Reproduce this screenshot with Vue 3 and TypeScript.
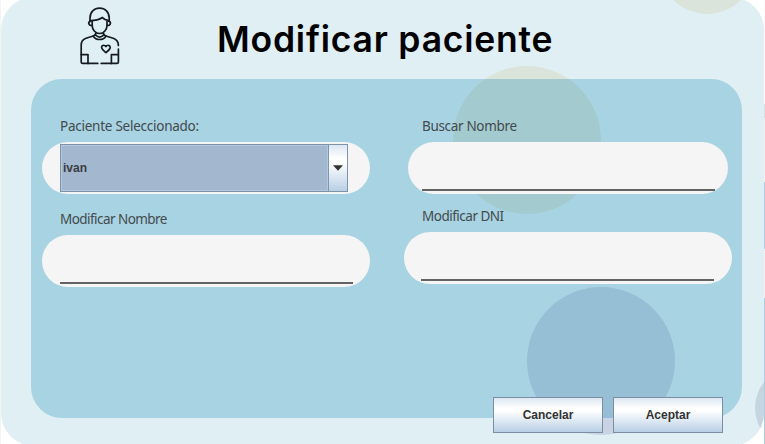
<script setup lang="ts">
import { ref } from 'vue'

const patients = ['ivan']
const selected = ref<string>(patients[0])
const search = ref('')
const name = ref('')
const dni = ref('')
</script>

<template>
  <div class="window">
    <div class="edge"></div>
    <main class="sheet">
      <i class="dot dot-top"></i>
      <i class="dot dot-middle"></i>
      <i class="dot dot-lower"></i>
      <i class="dot dot-right"></i>

      <header class="header">
        <svg class="patient" viewBox="0 0 40 58" fill="none" stroke="#151b1e" stroke-width="1.7" stroke-linecap="round" stroke-linejoin="round">
          <path d="M10 14.5V11C10 5 14 1.2 19.6 1.2S29.2 5 29.2 11v3.5" />
          <path d="M10.2 13.7c4.4-.1 8.8-1 12.2-3.2 2 2.5 4.3 2.7 6.8 3" />
          <path d="M12.2 14v4.5c0 4.1 3.1 8 7.4 8s7.4-3.9 7.4-8V14" />
          <path d="M10.5 14.2c-2.6 0-2.6 4.4 1.7 4.5M28.7 14.2c2.6 0 2.6 4.4-1.7 4.5" />
          <path d="M15.6 26v2.2c2.4 2.2 5.6 2.2 8 0V26" />
          <path d="M15.2 27.7l-2 1.5c2.8 4.4 10 4.4 12.8 0l-2-1.5" />
          <path d="M13.2 29L6 31.2C2.4 32.4 1.2 35 1.2 38.2V55q0 1.4 1.4 1.4H17.8M26 29l7.2 2.2c3.6 1.2 5.2 3.4 5.2 7.3M38.4 42.2V55q0 1.4-1.4 1.4H21.2" />
          <path d="M1.2 47.6H8v8.8M38.2 47.6h-6.8v8.8" />
          <path d="M25.9 45.6c-2.8-2.2-4.5-3.5-4.3-5.4.2-2.3 3.1-2.6 4.3-.6 1.2-2 4.1-1.7 4.3.6.2 1.9-1.5 3.2-4.3 5.4z" />
        </svg>
        <h1>Modificar paciente</h1>
      </header>

      <form class="panel" @submit.prevent>
        <i class="dot tint-middle"></i>
        <i class="dot tint-lower"></i>
        <div class="column">
          <label class="label first">Paciente Seleccionado:</label>
          <div class="pill pill-select">
            <button type="button" class="combo">
              <span class="value">{{ selected }}</span>
              <span class="arrow"><svg width="10" height="6" viewBox="0 0 10 6"><path d="M0 .3h10L5 5.7z" fill="#333" /></svg></span>
            </button>
          </div>
          <label class="label name-label">Modificar Nombre</label>
          <div class="pill"><input v-model="name" class="line" /></div>
        </div>
        <div class="column right">
          <label class="label first">Buscar Nombre</label>
          <div class="pill pill-search"><input v-model="search" class="line" /></div>
          <label class="label dni-label">Modificar DNI</label>
          <div class="pill pill-dni"><input v-model="dni" class="line" /></div>
        </div>
      </form>

      <footer class="actions">
        <button type="button" class="btn">Cancelar</button>
        <button type="button" class="btn">Aceptar</button>
      </footer>
    </main>
    <div class="edge edge-right"></div>
  </div>
</template>

<style>
body { overflow: hidden; background: #fff; }
</style>

<style scoped>
.window {
  display: flex;
  width: 765px;
  height: 444px;
  overflow: hidden;
  background: #fff;
  font-family: "Noto Sans", sans-serif;
}
.edge { width: 1px; height: 444px; background: #f3f3f3; }
.edge-right {
  background: linear-gradient(#fafafa 104px, #d5dfe0 104px 118px, #eff1f2 118px 182px, #a9cfdd 182px 249px, #f3f1f2 249px 298px, #a9cfdd 298px);
}
.sheet {
  position: relative;
  flex: none;
  width: 763px;
  height: 449px;
  margin-top: -3px;
  border-radius: 33px;
  overflow: hidden;
  background: #e0eff4;
}
.dot { position: absolute; border-radius: 50%; width: 148px; height: 148px; }
.dot-top { width: 96px; height: 96px; left: 658px; top: -79px; background: #dae4da; }
.dot-middle { left: 452px; top: 69px; background: #dae4da; }
.dot-lower { left: 526px; top: 290px; background: #c8d4e4; }
.dot-right { width: 84px; height: 84px; left: 754px; top: 369px; background: #c7d5e0; }
.header { position: relative; display: flex; height: 81.5px; padding-left: 79px; box-sizing: border-box; }
.patient { width: 40px; height: 58px; margin-top: 10px; flex: none; }
h1 {
  margin: 19px 0 0 97px;
  font: 600 35.5px/48px Inter, sans-serif;
  letter-spacing: .78px;
  white-space: nowrap;
  color: #000;
}
.panel {
  position: relative;
  display: flex;
  width: 711px;
  height: 339px;
  margin-left: 30px;
  box-sizing: border-box;
  padding-left: 11px;
  border-radius: 31px;
  overflow: hidden;
  background: #a8d3e2;
}
.tint-middle { left: 422px; top: -12.5px; background: #a3cbcf; }
.tint-lower { left: 496px; top: 208.5px; background: #96bed5; }
.column { position: relative; width: 328px; display: flex; flex-direction: column; }
.right { margin-left: 34px; }
.label {
  height: 20px;
  margin-left: 18px;
  font-size: 13.5px;
  line-height: 20px;
  letter-spacing: -.25px;
  color: #434a4d;
  white-space: nowrap;
}
.first { margin-top: 37px; }
.right .first { letter-spacing: -.33px; }
.name-label { margin-top: 15px; letter-spacing: -.55px; }
.dni-label { margin-top: 12px; letter-spacing: -.5px; }
.pill {
  display: flex;
  box-sizing: border-box;
  height: 51.5px;
  margin-top: 6.5px;
  padding: 0 17px 0 18px;
  border-radius: 26px;
  background: #f5f5f5;
}
.pill-select { margin-top: 6.5px; padding: 2px 22px 1.5px 18px; }
.pill-search { width: 320px; margin-left: 4px; padding: 0 13px 0 14px; }
.pill-dni { padding: 0 18px 0 17px; }
.line {
  width: 100%;
  height: 49px;
  box-sizing: border-box;
  padding: 0 2px;
  border: 0;
  outline: 0;
  border-bottom: 2px solid #636363;
  border-radius: 0;
  background: transparent;
  font: inherit;
}
.combo {
  display: flex;
  flex: 1;
  box-sizing: border-box;
  height: 48px;
  padding: 0;
  border: 1px solid #7f93a8;
  background: #a3b8ce;
  font: bold 12px/46px "Liberation Sans", sans-serif;
  color: #3b3b43;
}
.value { flex: 1; padding-left: 2px; text-align: left; box-shadow: inset 0 0 0 1px #b0c8e0; }
.arrow {
  display: flex;
  align-items: center;
  justify-content: center;
  width: 18px;
  border-left: 1px solid #8095ad;
  background: linear-gradient(#dce7f3, #fff 30%, #fff 38%, #b8cfe5);
}
.actions { position: relative; display: flex; gap: 10px; margin: -20.5px 0 0 492px; }
.btn {
  width: 110px;
  height: 36px;
  padding: 1px 0 0;
  border: 1px solid #7b8ea3;
  background: linear-gradient(#dce7f3, #fff 30%, #fff 38%, #b8cfe5);
  font: bold 12px/33px "Liberation Sans", sans-serif;
  color: #333;
}
</style>
